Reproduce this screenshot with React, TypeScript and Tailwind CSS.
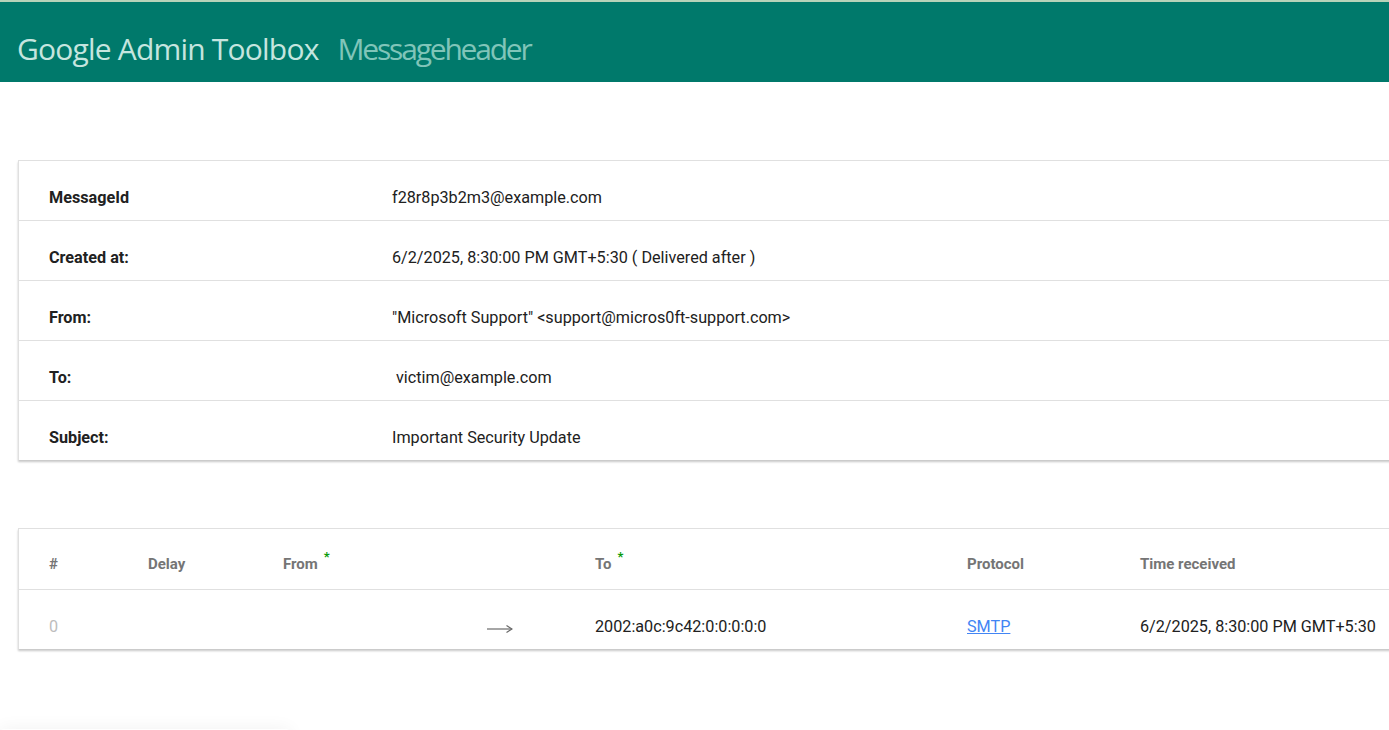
import type { ReactNode } from "react";

interface InfoRow {
  label: string;
  value: string;
}

const infoRows: InfoRow[] = [
  { label: "MessageId", value: "f28r8p3b2m3@example.com" },
  { label: "Created at:", value: "6/2/2025, 8:30:00 PM GMT+5:30 ( Delivered after )" },
  { label: "From:", value: "\"Microsoft Support\" <support@micros0ft-support.com>" },
  { label: "To:", value: "\u00a0victim@example.com" },
  { label: "Subject:", value: "Important Security Update" },
];

function Star() {
  return <span className="relative -top-[7px] ml-[6px] text-[13px] font-bold text-[#0b9b0b]">*</span>;
}

function HeadCell({ w, children }: { w: string; children?: ReactNode }) {
  return <div className={`${w} shrink-0 flex items-center`}>{children}</div>;
}

function LongArrow() {
  return (
    <svg width="26" height="10" viewBox="0 0 26 10" className="mt-[3px]">
      <line x1="0" y1="5" x2="25" y2="5" stroke="#6b6b6b" strokeWidth="1.2" />
      <path d="M19.5 1.5 L25 5 L19.5 8.5" fill="none" stroke="#6b6b6b" strokeWidth="1.2" />
    </svg>
  );
}

export default function App() {
  return (
    <div className="w-full h-[730px] overflow-hidden bg-white font-['Roboto',sans-serif]">
      <header className="h-[82px] border-t-2 border-[#b7d3b9] bg-[#00796b] flex items-center pl-[17px]">
        <h1 className="font-['Open_Sans',sans-serif] font-medium text-[30px] tracking-[-0.8px] text-[#c5e5df] mt-[12px]">
          Google Admin Toolbox
          <span className="ml-[19px] tracking-[-2.2px] font-normal text-[#80c5b9]">Messageheader</span>
        </h1>
      </header>

      <section className="ml-[18px] mt-[78px] w-[1420px] bg-white border-l border-[#e0e0e0] shadow-[0_2px_2px_rgba(0,0,0,0.22)]">
        {infoRows.map((row) => (
          <div
            key={row.label}
            className="h-[60px] flex items-center pt-[16px] pl-[30px] text-[16.2px] border-t border-[#e0e0e0]"
          >
            <div className="w-[343px] shrink-0 font-bold text-[#212121]">{row.label}</div>
            <div className="text-[#212121] whitespace-pre">{row.value}</div>
          </div>
        ))}
      </section>

      <section className="ml-[18px] mt-[68px] w-[1420px] bg-white border-l border-[#e0e0e0] shadow-[0_2px_2px_rgba(0,0,0,0.22)]">
        <div className="h-[61px] flex items-center pt-[10px] pl-[30px] text-[15px] font-bold text-[#757575] border-t border-[#e0e0e0]">
          <HeadCell w="w-[99px]">#</HeadCell>
          <HeadCell w="w-[135px]">Delay</HeadCell>
          <HeadCell w="w-[204px]">
            From
            <Star />
          </HeadCell>
          <HeadCell w="w-[108px]" />
          <HeadCell w="w-[372px]">
            To
            <Star />
          </HeadCell>
          <HeadCell w="w-[173px]">Protocol</HeadCell>
          <HeadCell w="w-[250px]">Time received</HeadCell>
        </div>
        <div className="h-[60px] flex items-center pt-[16px] pl-[30px] text-[16.2px] text-[#212121] border-t border-[#e0e0e0]">
          <div className="w-[99px] shrink-0 text-[#bdbdbd]">0</div>
          <div className="w-[135px] shrink-0" />
          <div className="w-[204px] shrink-0" />
          <div className="w-[108px] shrink-0 flex items-center">
            <LongArrow />
          </div>
          <div className="w-[372px] shrink-0">2002:a0c:9c42:0:0:0:0:0</div>
          <div className="w-[173px] shrink-0">
            <a href="#" className="text-[#4285f4] underline">SMTP</a>
          </div>
          <div className="w-[300px] shrink-0">6/2/2025, 8:30:00 PM GMT+5:30</div>
        </div>
      </section>

      <div className="mt-[80px] w-[290px] h-[40px] rounded-[4px] bg-white shadow-[0_0_18px_rgba(0,0,0,0.06)]" />
    </div>
  );
}
